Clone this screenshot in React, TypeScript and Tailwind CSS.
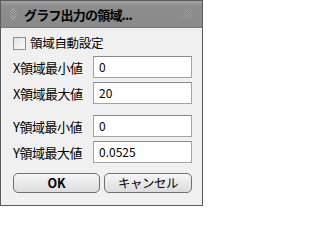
import React from "react";

const font = { fontFamily: '"Noto Sans CJK JP", "Noto Sans", sans-serif' };

function Row({ label, value, className = "" }: { label: string; value: string; className?: string }) {
  return (
    <div className={"flex items-center h-[22px] " + className}>
      <div className="w-[81px] pl-[1px] text-[13px] tracking-[-0.5px] leading-none text-black whitespace-nowrap">{label}</div>
      <div className="w-[99px] h-[22px] bg-white border border-[#a3a3a3] border-t-[#8a8a8a] pl-[5px] pt-[3px] text-[12px] leading-[14px] text-black">
        {value}
      </div>
    </div>
  );
}

export default function App() {
  return (
    <div style={font} className="w-[203px] h-[206px] bg-[#f0f0f0] border border-[#5a5a5a] flex flex-col overflow-hidden">
      <div className="h-[27px] shrink-0 bg-gradient-to-b from-[#a3a3a3] via-[#8d8d8d] via-20% to-[#8a8a8a] border-b border-[#7a7a7a] flex items-center pl-[7px] pr-[9px]">
        <svg width="10" height="12" viewBox="0 0 10 12" className="shrink-0">
          <path d="M2 5 L5 2 L8 5" fill="none" stroke="#d0d0d0" strokeWidth="1.6" />
          <path d="M2 7 L5 10 L8 7" fill="none" stroke="#d0d0d0" strokeWidth="1.6" />
          <path d="M2 5 L5 2 L8 5" fill="none" stroke="#4a4a4a" strokeWidth="0.7" />
          <path d="M2 7 L5 10 L8 7" fill="none" stroke="#4a4a4a" strokeWidth="0.7" />
        </svg>
        <div className="ml-[6px] text-[13px] font-bold text-black leading-none whitespace-nowrap tracking-[-0.8px]">
          グラフ出力の領域...
        </div>
        <div className="flex-1" />
        <svg width="11" height="11" viewBox="0 0 11 11" className="shrink-0 mb-[1px]">
          <path d="M1.5 1.5 L9.5 9.5 M9.5 1.5 L1.5 9.5" stroke="#a5a5a5" strokeWidth="2.2" />
          <path d="M1.5 1.5 L9.5 9.5 M9.5 1.5 L1.5 9.5" stroke="#6a6a6a" strokeWidth="0.8" />
        </svg>
      </div>
      <div className="flex flex-col pl-[11px] pr-[10px]">
        <div className="flex items-center mt-[9px] h-[13px] pl-[1px]">
          <div className="w-[13px] h-[13px] border border-[#8e8f8f] bg-gradient-to-br from-[#e2e2e2] to-[#fafafa]" />
          <div className="ml-[4px] text-[12.5px] tracking-[-0.3px] leading-none text-black whitespace-nowrap">領域自動設定</div>
        </div>
        <Row label="X領域最小値" value="0" className="mt-[6px]" />
        <Row label="X領域最大値" value="20" className="mt-[4px]" />
        <Row label="Y領域最小値" value="0" className="mt-[11px]" />
        <Row label="Y領域最大値" value="0.0525" className="mt-[4px]" />
        <div className="flex mt-[10px] gap-[4px] pl-[1px]">
          <button className="w-[87px] h-[20px] rounded-[5px] border border-[#707070] bg-gradient-to-b from-[#f6f6f6] to-[#dcdcdc] text-[12.5px] font-bold leading-none text-black">
            OK
          </button>
          <button className="w-[88px] h-[20px] rounded-[5px] border border-[#707070] bg-gradient-to-b from-[#f6f6f6] to-[#dcdcdc] text-[12.5px] tracking-[-0.5px] leading-none text-black">
            キャンセル
          </button>
        </div>
      </div>
    </div>
  );
}
